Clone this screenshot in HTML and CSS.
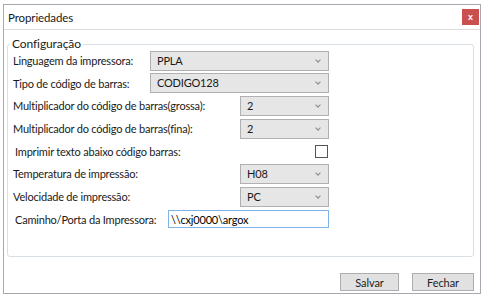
FILE: index.html
```html
<!DOCTYPE html>
<html lang="pt">
<head>
  <meta charset="UTF-8">
  <meta name="viewport" content="width=device-width, initial-scale=1.0">
  <title>Propriedades</title>
  <link rel="stylesheet" href="styles.css">
</head>
<body>
  <div class="window">
    <div class="titlebar">
      <span class="title">Propriedades</span>
      <button class="close">x</button>
    </div>

    <fieldset class="group">
      <legend>Configuração</legend>

      <div class="rows">
        <div class="row">
          <label class="lbl short">Linguagem da impressora:</label>
          <div class="combo wide">PPLA</div>
        </div>
        <div class="row">
          <label class="lbl short">Tipo de código de barras:</label>
          <div class="combo wide">CODIGO128</div>
        </div>
        <div class="row">
          <label class="lbl long">Multiplicador do código de barras(grossa):</label>
          <div class="combo">2</div>
        </div>
        <div class="row">
          <label class="lbl long">Multiplicador do código de barras(fina):</label>
          <div class="combo">2</div>
        </div>
        <div class="row check-row">
          <label class="lbl check-lbl">Imprimir texto abaixo código barras:</label>
          <span class="checkbox"></span>
        </div>
        <div class="row">
          <label class="lbl long">Temperatura de impressão:</label>
          <div class="combo">H08</div>
        </div>
        <div class="row">
          <label class="lbl long">Velocidade de impressão:</label>
          <div class="combo">PC</div>
        </div>
        <div class="row path-row">
          <label class="lbl path-lbl">Caminho/Porta da Impressora:</label>
          <input class="path" type="text" value="\\cxj0000\argox">
        </div>
      </div>
    </fieldset>

    <div class="actions">
      <button class="btn save">Salvar</button>
      <button class="btn">Fechar</button>
    </div>
  </div>
</body>
</html>
```

FILE: styles.css
```css
body {
  margin: 0;
  padding: 4px 0 0 3px;
  background: #fff;
  font-family: Lato, "Noto Sans", sans-serif;
  font-size: 11px;
  letter-spacing: -0.2px;
  color: #1a1a1a;
}

.window {
  width: 476px;
  height: 288px;
  border: 1px solid #a7a9b0;
  display: flex;
  flex-direction: column;
}

.titlebar {
  height: 24px;
  border-bottom: 1px solid #dcdcdc;
  display: flex;
  align-items: center;
  justify-content: space-between;
  padding: 0 1px 0 4px;
}

.title {
  font-size: 11.5px;
  letter-spacing: -0.1px;
}

.close {
  width: 17px;
  height: 16px;
  padding: 0;
  border: none;
  background: #c9504f;
  color: #fff;
  font-family: "Liberation Sans", sans-serif;
  font-size: 9px;
  font-weight: bold;
  letter-spacing: 0;
  line-height: 14px;
}

.group {
  box-sizing: border-box;
  margin: 8px 6px 0 3px;
  height: 219px;
  border: 1px solid #d8e0e6;
  border-radius: 3px;
  padding: 0 0 0 5px;
}

.group legend {
  font-size: 12px;
  line-height: 12px;
  letter-spacing: -0.1px;
  padding: 0 2px;
  margin-left: -3px;
  color: #222;
}

.rows {
  display: flex;
  flex-direction: column;
  gap: 2.7px;
  padding-top: 0.5px;
}

.row {
  display: flex;
  align-items: center;
  height: 20px;
  white-space: nowrap;
}

.lbl {
  flex: none;
}

.lbl.short {
  width: 137px;
}

.lbl.long {
  width: 227px;
}

.combo {
  box-sizing: border-box;
  width: 89px;
  height: 20px;
  border: 1px solid #b0b0b0;
  background: #e6e6e6;
  padding: 0 0 0 6px;
  line-height: 18px;
  position: relative;
}

.combo.wide {
  width: 179px;
}

.combo::after {
  content: "";
  position: absolute;
  right: 8px;
  top: 6px;
  width: 3px;
  height: 3px;
  border-right: 1px solid #888;
  border-bottom: 1px solid #888;
  transform: rotate(45deg);
}

.check-row {
  padding-left: 2px;
}

.check-lbl {
  width: 300px;
}

.checkbox {
  width: 11px;
  height: 11px;
  border: 1px solid #555;
  background: #fff;
}

.path-row {
  padding-left: 2px;
}

.path-lbl {
  width: 153px;
}

.path {
  box-sizing: border-box;
  width: 161px;
  height: 18px;
  border: 1px solid #7eb4ea;
  padding: 0 2px;
  margin: 0;
  font-family: inherit;
  font-size: 11px;
  letter-spacing: -0.2px;
  color: #000;
}

.actions {
  display: flex;
  justify-content: flex-end;
  gap: 13px;
  padding: 16px 6px 0 0;
}

.btn {
  box-sizing: border-box;
  width: 62px;
  height: 18px;
  padding: 0;
  border: 1px solid #adadad;
  background: #e1e1e1;
  font-family: inherit;
  font-size: 11px;
  letter-spacing: -0.1px;
  color: #222;
}

.btn.save {
  width: 59px;
}
```
